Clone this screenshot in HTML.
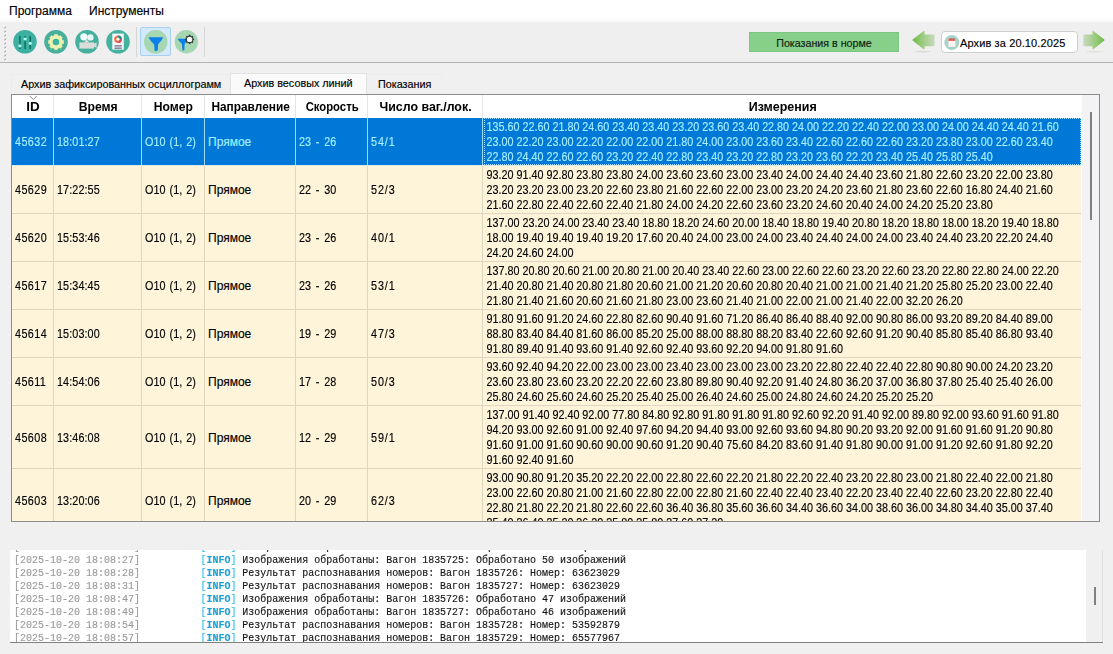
<!DOCTYPE html><html><head><meta charset="utf-8"><style>
*{box-sizing:border-box;margin:0;padding:0}
html,body{width:1113px;height:654px;overflow:hidden;background:#f0f0f0;font-family:"Liberation Sans",sans-serif;color:#000;position:relative}
div{position:absolute}
.menu{left:0;top:0;width:1113px;height:20px;background:#fff}
.menu span{position:absolute;top:4px;font-size:12px;line-height:14px;color:#000}
.tbar{left:0;top:20px;width:1113px;height:43px;background:#efefef;border-bottom:1px solid #b4b4b4;border-top:2px solid #fafafa}
.grip{left:3px;top:4px;width:4px;height:35px}
.sep{top:5px;width:1px;height:30px;background:#d6d6d6}
.ok{left:749px;top:32px;width:150px;height:20px;background:#86d08a;border:1px solid #7cc680;font-size:10.7px;line-height:20px;text-align:center;color:#102010}
.date{left:941px;top:31px;width:137px;height:22px;background:#fff;border:1px solid #cfcfcf;border-radius:4px}
.date span{position:absolute;left:18px;top:4px;font-size:11px;letter-spacing:0.12px;line-height:14px;color:#000}
.tab{top:74px;height:20px;font-size:10.8px;line-height:19px;color:#000;background:#f0f0f0;border:1px solid #ebebeb;border-bottom:none;border-right:none}
.t1{left:11px;width:220px;padding-left:9px}
.t2{left:230px;top:73px;width:137px;height:21px;background:#fafafa;padding-left:13px;border-color:#e2e2e2;border-right:1px solid #e2e2e2;line-height:19px}
.t3{left:366px;width:77px;padding-left:11px}
.tbl{left:11px;top:94px;width:1089px;height:428px;border:1px solid #8c8c8c;background:#f0f0f0}
.hdr{left:12px;top:95px;width:1069px;height:23px;background:#fff}
.hc{top:95px;height:23px;font-size:12px;font-weight:bold;line-height:24px;text-align:center;padding-left:2px}
.hc span{display:inline-block}
.hdiv{top:95px;width:1px;height:23px;background:#e5e5e5}
.sorti{left:29px;top:95px;width:9px;height:6px}
.row{left:12px;width:1069px;background:#fef4da;overflow:hidden}
.row.sel{background:#0078d7;color:#a4eeff}
.row::after{content:"";position:absolute;left:0;right:0;bottom:0;height:1px;background:#e0d6c0}
.row.sel::after{background:#dde8ec}
.c{top:0;font-size:12px;padding-left:4px;white-space:nowrap;overflow:hidden}
.c span{display:inline-block;transform:scaleX(0.9);transform-origin:0 50%}
.c.cy span{transform:none}
.vdiv{top:0;width:1px;height:100%;background:#e0d6c0}
.sel .vdiv{background:#9fdcf5}
.m{top:2px;padding-left:5px;font-size:12px;line-height:15px;white-space:nowrap;transform:scaleX(0.898);transform-origin:0 0}
.focus{top:0;width:597px;height:47px;border:1px dotted #9fdcf5}
.vsb{left:1081px;top:95px;width:18px;height:426px;background:#f3f3f6;border-left:1px solid #fbfbfb}
.vth{left:8px;top:17px;width:2px;height:108px;background:#808080}
.log{left:10px;top:550px;width:1093px;height:93px;background:#f0f0f0;border-bottom:1px solid #808080}
.login{left:0;top:0;width:1076px;height:92px;background:#fff;overflow:hidden}
.ll{left:4px;height:13px;font-family:"Liberation Mono",monospace;font-size:11.3px;line-height:14px;white-space:pre;transform:scaleX(0.8846);transform-origin:0 0}
.ts{color:#9a9a9a}
.inf{position:absolute;left:210.8px;color:#30bce6}
.inf b{font-weight:bold;color:#1ca0d4}
.msg{position:absolute;left:258px;color:#141414}
.lsb{left:1076px;top:0;width:17px;height:92px;background:#f0f0f0;border-right:1px solid #e0e0e0}
.lth{left:8px;top:37px;width:2px;height:18px;background:#808080}
.tbody{left:12px;top:118px;width:1069px;height:403px;overflow:hidden}
.row{left:0}
.hl{left:140px;top:5px;width:31px;height:29px;background:#d2eafc;border:1px solid #a8d0f2;border-radius:2px}
.row .c, .row .m, .tab, .menu span, .ok, .date span, .ll{-webkit-text-stroke:0.15px currentColor}

</style></head><body>
<div class="menu"><span style="left:9px">Программа</span><span style="left:89px">Инструменты</span></div>
<div class="tbar">
 <div class="grip"><svg style="display:block" width="4" height="35" viewBox="0 0 4 35"><g fill="#8c8c8c"><path d="M1 2.1 L2.6 0.5 L3.2 1.0 L1.6 2.6 Z"/><path d="M1 6.1 L2.6 4.5 L3.2 5.0 L1.6 6.6 Z"/><path d="M1 10.1 L2.6 8.5 L3.2 9.0 L1.6 10.6 Z"/><path d="M1 14.1 L2.6 12.5 L3.2 13.0 L1.6 14.6 Z"/><path d="M1 18.1 L2.6 16.5 L3.2 17.0 L1.6 18.6 Z"/><path d="M1 22.1 L2.6 20.5 L3.2 21.0 L1.6 22.6 Z"/><path d="M1 26.1 L2.6 24.5 L3.2 25.0 L1.6 26.6 Z"/><path d="M1 30.1 L2.6 28.5 L3.2 29.0 L1.6 30.6 Z"/><path d="M1 34.1 L2.6 32.5 L3.2 33.0 L1.6 34.6 Z"/></g></svg></div>
 <div class="sep" style="left:136px"></div>
 <div class="sep" style="left:204px"></div>
 <div class="hl"></div>
</div>
<svg style="position:absolute;left:0;top:0" width="220" height="63" viewBox="0 0 220 63">
 <defs>
  <filter id="bl" x="-20%" y="-20%" width="140%" height="140%"><feGaussianBlur stdDeviation="0.45"/></filter>
 </defs>
 <g filter="url(#bl)">
 <!-- icon1 sliders -->
 <circle cx="25" cy="41.8" r="11.8" fill="#3db1a1"/>
 <rect x="19.2" y="36" width="1.4" height="13" fill="#0b6b5c"/>
 <rect x="24.4" y="36" width="1.4" height="13" fill="#0b6b5c"/>
 <rect x="29.5" y="36" width="1.4" height="13" fill="#0b6b5c"/>
 <circle cx="19.9" cy="45.8" r="1.6" fill="#b0fafa"/>
 <circle cx="25.1" cy="39" r="1.6" fill="#b0fafa"/>
 <circle cx="30.2" cy="43.3" r="1.6" fill="#b0fafa"/>
 <!-- icon2 gear -->
 <circle cx="56" cy="41.8" r="11.8" fill="#47af9a"/>
 <path d="M63.55 40.50 L63.55 43.50 L62.41 43.59 L61.65 45.40 L62.40 46.28 L60.28 48.40 L59.40 47.65 L57.59 48.41 L57.50 49.55 L54.50 49.55 L54.41 48.41 L52.60 47.65 L51.72 48.40 L49.60 46.28 L50.35 45.40 L49.59 43.59 L48.45 43.50 L48.45 40.50 L49.59 40.41 L50.35 38.60 L49.60 37.72 L51.72 35.60 L52.60 36.35 L54.41 35.59 L54.50 34.45 L57.50 34.45 L57.59 35.59 L59.40 36.35 L60.28 35.60 L62.40 37.72 L61.65 38.60 L62.41 40.41 Z" fill="#eef2b0" stroke="#eef2b0" stroke-width="0.6" stroke-linejoin="round"/>
 <circle cx="56" cy="42" r="3.3" fill="#3db3a2"/>
 <!-- icon3 camera -->
 <circle cx="87" cy="41.8" r="11.8" fill="#45b09e"/>
 <path d="M79.4 42.4 L94 42.4 L94 48.6 L79.4 48.6 Z" fill="#dcdcda"/>
 <path d="M94 43.6 L96.6 42.6 L96.6 47.8 L94 46.8 Z" fill="#d8dcd8"/>
 <path d="M84 42.6 L86.6 39.2 L89.2 42.6 Z" fill="#dcdcda"/>
 <circle cx="83.8" cy="36.8" r="3.6" fill="#f2fcfc"/>
 <circle cx="90.4" cy="37.4" r="3.2" fill="#e6fafa"/>
 <!-- icon4 doc -->
 <circle cx="118" cy="41.8" r="11.8" fill="#45b2a0"/>
 <rect x="112.3" y="33.6" width="11.5" height="16" fill="#f4fafa"/>
 <circle cx="118" cy="39.2" r="3.8" fill="#f07040"/>
 <path d="M118 39.2 L118 35.4 A3.8 3.8 0 0 1 121.8 39.2 Z" fill="#1f8a80"/>
 <path d="M118 39.2 L121.8 39.2 A3.8 3.8 0 0 1 118.5 43 Z" fill="#e04060"/>
 <circle cx="118" cy="39.2" r="1.6" fill="#f4fafa"/>
 <rect x="114.4" y="45.2" width="7.4" height="1.3" fill="#7a6a8a"/>
 <rect x="114.4" y="47.5" width="7.4" height="1.3" fill="#7a6a8a"/>
 <!-- icon5 funnel -->
 <circle cx="155.7" cy="41.8" r="11.8" fill="#a6d6b2"/>
 <path d="M148.6 37.2 L163 37.2 C162.6 39.4 159.6 42.4 158 44.4 L157.8 50 C157.2 51 155.6 51.2 154.6 50.8 L154.2 44.4 C152.2 42.4 149.2 39.4 148.6 37.2 Z" fill="#0a80e8"/>
 <!-- icon6 funnel+gear -->
 <circle cx="186.3" cy="41.8" r="11.7" fill="#a6d6b2"/>
 <path d="M177.8 38.8 L188 38.8 C187.6 40.6 185.6 42.6 184.6 44 L184.4 49.8 C184 50.6 183 50.6 182.4 50.2 L182 44 C180.6 42.6 178.2 40.6 177.8 38.8 Z" fill="#0a80e8"/>
 <path d="M194.13 38.59 L194.13 40.21 L193.19 40.28 L192.76 41.32 L193.37 42.03 L192.23 43.17 L191.52 42.56 L190.48 42.99 L190.41 43.93 L188.79 43.93 L188.72 42.99 L187.68 42.56 L186.97 43.17 L185.83 42.03 L186.44 41.32 L186.01 40.28 L185.07 40.21 L185.07 38.59 L186.01 38.52 L186.44 37.48 L185.83 36.77 L186.97 35.63 L187.68 36.24 L188.72 35.81 L188.79 34.87 L190.41 34.87 L190.48 35.81 L191.52 36.24 L192.23 35.63 L193.37 36.77 L192.76 37.48 L193.19 38.52 Z" fill="#2a3432"/>
 <circle cx="189.6" cy="39.4" r="2.7" fill="#ffffff"/>
 </g>
</svg>
<div class="ok">Показания в норме</div>
<svg style="position:absolute;left:905px;top:25px" width="210" height="32" viewBox="905 25 210 32">
 <defs>
  <linearGradient id="ga" x1="0" x2="1" y1="0" y2="0"><stop offset="0" stop-color="#72bc48"/><stop offset="0.45" stop-color="#9ccc80"/><stop offset="1" stop-color="#c6d8bc"/></linearGradient>
  <linearGradient id="gb" x1="0" x2="1" y1="0" y2="0"><stop offset="0" stop-color="#c6d8bc"/><stop offset="0.55" stop-color="#9ccc80"/><stop offset="1" stop-color="#72bc48"/></linearGradient>
  <filter id="bl2"><feGaussianBlur stdDeviation="0.5"/></filter>
 </defs>
 <g filter="url(#bl2)">
 <path d="M913 40 L924 31.5 L924 35 L934 35 L934 45.7 L924 45.7 L924 48.8 Z" fill="url(#ga)" stroke="url(#ga)" stroke-width="1.2" stroke-linejoin="round"/>
 <ellipse cx="923" cy="51.6" rx="8" ry="0.8" fill="#dadada"/>
 <path d="M1104 40 L1093 31.5 L1093 35 L1084 35 L1084 45.7 L1093 45.7 L1093 48.8 Z" fill="url(#gb)" stroke="url(#gb)" stroke-width="1.2" stroke-linejoin="round"/>
 <ellipse cx="1094" cy="51.6" rx="8" ry="0.8" fill="#e0e0e0"/>
 </g>
</svg>
<div class="date"><svg style="position:absolute;left:1px;top:1px;display:block" width="18" height="18" viewBox="0 0 18 18">
 <circle cx="8.8" cy="9.5" r="7.5" fill="#a9d3c6"/>
 <rect x="5.4" y="5.8" width="7" height="8" fill="#faf6f4"/>
 <rect x="5.4" y="5.8" width="7" height="2.2" fill="#e46a64"/>
 <rect x="6.6" y="5" width="0.9" height="1.6" fill="#b04848"/><rect x="8.5" y="5" width="0.9" height="1.6" fill="#b04848"/><rect x="10.4" y="5" width="0.9" height="1.6" fill="#b04848"/>
 </svg><span>Архив за 20.10.2025</span></div>

<div class="tab t1">Архив зафиксированных осциллограмм</div>
<div class="tab t3">Показания</div>
<div class="tab t2">Архив весовых линий</div>
<div class="tbl"></div>
<div class="hdr"></div>
<div class="hc" style="left:11px;width:42px"><span style="transform:scaleX(1.12)">ID</span></div>
<div class="hc" style="left:53px;width:88px"><span style="transform:scaleX(1.017)">Время</span></div>
<div class="hdiv" style="left:53px"></div>
<div class="hc" style="left:141px;width:63px"><span style="transform:scaleX(1.011)">Номер</span></div>
<div class="hdiv" style="left:141px"></div>
<div class="hc" style="left:204px;width:91px"><span style="transform:scaleX(0.99)">Направление</span></div>
<div class="hdiv" style="left:204px"></div>
<div class="hc" style="left:295px;width:72px"><span style="transform:scaleX(0.94)">Скорость</span></div>
<div class="hdiv" style="left:295px"></div>
<div class="hc" style="left:367px;width:115px"><span style="transform:scaleX(1.033)">Число ваг./лок.</span></div>
<div class="hdiv" style="left:367px"></div>
<div class="hc" style="left:482px;width:599px"><span style="transform:scaleX(1.038)">Измерения</span></div>
<div class="hdiv" style="left:482px"></div>
<div class="sorti"><svg style="display:block" width="9" height="6" viewBox="0 0 9 6"><polyline points="0.8,1 4.3,4.5 7.8,1" fill="none" stroke="#8a8a8a" stroke-width="1"/></svg></div>
<div class="tbody">
<div class="row sel" style="top:0px;height:48px">
<div class="c" style="left:-1px;width:42px;line-height:49px"><span style="letter-spacing:0.45px">45632</span></div>
<div class="c" style="left:41px;width:88px;line-height:49px"><span style="letter-spacing:0.1px">18:01:27</span></div>
<div class="vdiv" style="left:41px"></div>
<div class="c" style="left:129px;width:63px;line-height:49px"><span style="word-spacing:1.3px">О10 (1, 2)</span></div>
<div class="vdiv" style="left:129px"></div>
<div class="c cy" style="left:192px;width:91px;line-height:49px"><span style="">Прямое</span></div>
<div class="vdiv" style="left:192px"></div>
<div class="c" style="left:283px;width:72px;line-height:49px"><span style="word-spacing:2px">23 - 26</span></div>
<div class="vdiv" style="left:283px"></div>
<div class="c" style="left:355px;width:115px;line-height:49px"><span style="letter-spacing:1px">54/1</span></div>
<div class="vdiv" style="left:355px"></div>
<div class="vdiv" style="left:470px"></div>
<div class="m" style="left:470px">135.60 22.60 21.80 24.60 23.40 23.40 23.20 23.60 23.40 22.80 24.00 22.20 22.40 22.00 23.00 24.00 24.40 24.40 21.60<br>23.00 22.20 23.00 22.20 22.00 22.00 21.80 24.00 23.00 23.60 23.40 22.60 22.60 22.60 23.20 23.80 23.00 22.60 23.40<br>22.80 24.40 22.60 22.60 23.20 22.40 22.80 23.40 23.20 22.80 23.20 23.60 22.20 23.40 25.40 25.80 25.40</div>
<div class="focus" style="left:472px"></div>
</div>
<div class="row" style="top:48px;height:48px">
<div class="c" style="left:-1px;width:42px;line-height:49px"><span style="letter-spacing:0.45px">45629</span></div>
<div class="c" style="left:41px;width:88px;line-height:49px"><span style="letter-spacing:0.1px">17:22:55</span></div>
<div class="vdiv" style="left:41px"></div>
<div class="c" style="left:129px;width:63px;line-height:49px"><span style="word-spacing:1.3px">О10 (1, 2)</span></div>
<div class="vdiv" style="left:129px"></div>
<div class="c cy" style="left:192px;width:91px;line-height:49px"><span style="">Прямое</span></div>
<div class="vdiv" style="left:192px"></div>
<div class="c" style="left:283px;width:72px;line-height:49px"><span style="word-spacing:2px">22 - 30</span></div>
<div class="vdiv" style="left:283px"></div>
<div class="c" style="left:355px;width:115px;line-height:49px"><span style="letter-spacing:1px">52/3</span></div>
<div class="vdiv" style="left:355px"></div>
<div class="vdiv" style="left:470px"></div>
<div class="m" style="left:470px">93.20 91.40 92.80 23.80 23.80 24.00 23.60 23.60 23.00 23.40 24.00 24.40 24.40 23.60 21.80 22.60 23.20 22.00 23.80<br>23.20 23.20 23.00 23.20 22.60 23.80 21.60 22.60 22.00 23.00 23.20 24.20 23.60 21.80 23.60 22.60 16.80 24.40 21.60<br>21.60 22.80 22.40 22.60 22.40 21.80 24.00 24.20 22.60 23.60 23.20 24.60 20.40 24.00 24.20 25.20 23.80</div>
</div>
<div class="row" style="top:96px;height:48px">
<div class="c" style="left:-1px;width:42px;line-height:49px"><span style="letter-spacing:0.45px">45620</span></div>
<div class="c" style="left:41px;width:88px;line-height:49px"><span style="letter-spacing:0.1px">15:53:46</span></div>
<div class="vdiv" style="left:41px"></div>
<div class="c" style="left:129px;width:63px;line-height:49px"><span style="word-spacing:1.3px">О10 (1, 2)</span></div>
<div class="vdiv" style="left:129px"></div>
<div class="c cy" style="left:192px;width:91px;line-height:49px"><span style="">Прямое</span></div>
<div class="vdiv" style="left:192px"></div>
<div class="c" style="left:283px;width:72px;line-height:49px"><span style="word-spacing:2px">23 - 26</span></div>
<div class="vdiv" style="left:283px"></div>
<div class="c" style="left:355px;width:115px;line-height:49px"><span style="letter-spacing:1px">40/1</span></div>
<div class="vdiv" style="left:355px"></div>
<div class="vdiv" style="left:470px"></div>
<div class="m" style="left:470px">137.00 23.20 24.00 23.40 23.40 18.80 18.20 24.60 20.00 18.40 18.80 19.40 20.80 18.20 18.80 18.00 18.20 19.40 18.80<br>18.00 19.40 19.40 19.40 19.20 17.60 20.40 24.00 23.00 24.00 23.40 24.40 24.00 24.00 23.40 24.40 23.20 22.20 24.40<br>24.20 24.60 24.00</div>
</div>
<div class="row" style="top:144px;height:48px">
<div class="c" style="left:-1px;width:42px;line-height:49px"><span style="letter-spacing:0.45px">45617</span></div>
<div class="c" style="left:41px;width:88px;line-height:49px"><span style="letter-spacing:0.1px">15:34:45</span></div>
<div class="vdiv" style="left:41px"></div>
<div class="c" style="left:129px;width:63px;line-height:49px"><span style="word-spacing:1.3px">О10 (1, 2)</span></div>
<div class="vdiv" style="left:129px"></div>
<div class="c cy" style="left:192px;width:91px;line-height:49px"><span style="">Прямое</span></div>
<div class="vdiv" style="left:192px"></div>
<div class="c" style="left:283px;width:72px;line-height:49px"><span style="word-spacing:2px">23 - 26</span></div>
<div class="vdiv" style="left:283px"></div>
<div class="c" style="left:355px;width:115px;line-height:49px"><span style="letter-spacing:1px">53/1</span></div>
<div class="vdiv" style="left:355px"></div>
<div class="vdiv" style="left:470px"></div>
<div class="m" style="left:470px">137.80 20.80 20.60 21.00 20.80 21.00 20.40 23.40 22.60 23.00 22.60 22.60 23.20 22.60 23.20 22.80 22.80 24.00 22.20<br>21.40 20.80 21.40 20.80 21.80 20.60 21.00 21.20 20.60 20.80 20.40 21.00 21.00 21.40 21.20 25.80 25.20 23.00 22.40<br>21.80 21.40 21.60 20.60 21.60 21.80 23.00 23.60 21.40 21.00 22.00 21.00 21.40 22.00 32.20 26.20</div>
</div>
<div class="row" style="top:192px;height:48px">
<div class="c" style="left:-1px;width:42px;line-height:49px"><span style="letter-spacing:0.45px">45614</span></div>
<div class="c" style="left:41px;width:88px;line-height:49px"><span style="letter-spacing:0.1px">15:03:00</span></div>
<div class="vdiv" style="left:41px"></div>
<div class="c" style="left:129px;width:63px;line-height:49px"><span style="word-spacing:1.3px">О10 (1, 2)</span></div>
<div class="vdiv" style="left:129px"></div>
<div class="c cy" style="left:192px;width:91px;line-height:49px"><span style="">Прямое</span></div>
<div class="vdiv" style="left:192px"></div>
<div class="c" style="left:283px;width:72px;line-height:49px"><span style="word-spacing:2px">19 - 29</span></div>
<div class="vdiv" style="left:283px"></div>
<div class="c" style="left:355px;width:115px;line-height:49px"><span style="letter-spacing:1px">47/3</span></div>
<div class="vdiv" style="left:355px"></div>
<div class="vdiv" style="left:470px"></div>
<div class="m" style="left:470px">91.80 91.60 91.20 24.60 22.80 82.60 90.40 91.60 71.20 86.40 86.40 88.40 92.00 90.80 86.00 93.20 89.20 84.40 89.00<br>88.80 83.40 84.40 81.60 86.00 85.20 25.00 88.00 88.80 88.20 83.40 22.60 92.60 91.20 90.40 85.80 85.40 86.80 93.40<br>91.80 89.40 91.40 93.60 91.40 92.60 92.40 93.60 92.20 94.00 91.80 91.60</div>
</div>
<div class="row" style="top:240px;height:48px">
<div class="c" style="left:-1px;width:42px;line-height:49px"><span style="letter-spacing:0.45px">45611</span></div>
<div class="c" style="left:41px;width:88px;line-height:49px"><span style="letter-spacing:0.1px">14:54:06</span></div>
<div class="vdiv" style="left:41px"></div>
<div class="c" style="left:129px;width:63px;line-height:49px"><span style="word-spacing:1.3px">О10 (1, 2)</span></div>
<div class="vdiv" style="left:129px"></div>
<div class="c cy" style="left:192px;width:91px;line-height:49px"><span style="">Прямое</span></div>
<div class="vdiv" style="left:192px"></div>
<div class="c" style="left:283px;width:72px;line-height:49px"><span style="word-spacing:2px">17 - 28</span></div>
<div class="vdiv" style="left:283px"></div>
<div class="c" style="left:355px;width:115px;line-height:49px"><span style="letter-spacing:1px">50/3</span></div>
<div class="vdiv" style="left:355px"></div>
<div class="vdiv" style="left:470px"></div>
<div class="m" style="left:470px">93.60 92.40 94.20 22.00 23.00 23.00 23.40 23.00 23.00 23.00 23.20 22.80 22.40 22.40 22.80 90.80 90.00 24.20 23.20<br>23.60 23.80 23.60 23.20 22.20 22.60 23.80 89.80 90.40 92.20 91.40 24.80 36.20 37.00 36.80 37.80 25.40 25.40 26.00<br>25.80 24.60 25.60 24.60 25.20 25.40 25.00 26.40 24.60 25.00 24.80 24.60 24.20 25.20 25.20</div>
</div>
<div class="row" style="top:288px;height:63px">
<div class="c" style="left:-1px;width:42px;line-height:64px"><span style="letter-spacing:0.45px">45608</span></div>
<div class="c" style="left:41px;width:88px;line-height:64px"><span style="letter-spacing:0.1px">13:46:08</span></div>
<div class="vdiv" style="left:41px"></div>
<div class="c" style="left:129px;width:63px;line-height:64px"><span style="word-spacing:1.3px">О10 (1, 2)</span></div>
<div class="vdiv" style="left:129px"></div>
<div class="c cy" style="left:192px;width:91px;line-height:64px"><span style="">Прямое</span></div>
<div class="vdiv" style="left:192px"></div>
<div class="c" style="left:283px;width:72px;line-height:64px"><span style="word-spacing:2px">12 - 29</span></div>
<div class="vdiv" style="left:283px"></div>
<div class="c" style="left:355px;width:115px;line-height:64px"><span style="letter-spacing:1px">59/1</span></div>
<div class="vdiv" style="left:355px"></div>
<div class="vdiv" style="left:470px"></div>
<div class="m" style="left:470px">137.00 91.40 92.40 92.00 77.80 84.80 92.80 91.80 91.80 91.80 92.60 92.20 91.40 92.00 89.80 92.00 93.60 91.60 91.80<br>94.20 93.00 92.60 91.00 92.40 97.60 94.20 94.40 93.00 92.60 93.60 94.80 90.20 93.20 92.00 91.60 91.60 91.20 90.80<br>91.60 91.00 91.60 90.60 90.00 90.60 91.20 90.40 75.60 84.20 83.60 91.40 91.80 90.00 91.00 91.20 92.60 91.80 92.20<br>91.60 92.40 91.60</div>
</div>
<div class="row" style="top:351px;height:63px">
<div class="c" style="left:-1px;width:42px;line-height:64px"><span style="letter-spacing:0.45px">45603</span></div>
<div class="c" style="left:41px;width:88px;line-height:64px"><span style="letter-spacing:0.1px">13:20:06</span></div>
<div class="vdiv" style="left:41px"></div>
<div class="c" style="left:129px;width:63px;line-height:64px"><span style="word-spacing:1.3px">О10 (1, 2)</span></div>
<div class="vdiv" style="left:129px"></div>
<div class="c cy" style="left:192px;width:91px;line-height:64px"><span style="">Прямое</span></div>
<div class="vdiv" style="left:192px"></div>
<div class="c" style="left:283px;width:72px;line-height:64px"><span style="word-spacing:2px">20 - 29</span></div>
<div class="vdiv" style="left:283px"></div>
<div class="c" style="left:355px;width:115px;line-height:64px"><span style="letter-spacing:1px">62/3</span></div>
<div class="vdiv" style="left:355px"></div>
<div class="vdiv" style="left:470px"></div>
<div class="m" style="left:470px">93.00 90.80 91.20 35.20 22.20 22.00 22.80 22.60 22.20 21.80 22.20 22.40 23.20 22.80 23.00 21.80 22.40 22.00 21.80<br>23.00 22.60 20.80 21.00 21.60 22.80 22.00 22.80 21.60 22.40 22.40 23.40 22.20 23.40 22.40 22.60 23.20 22.80 22.40<br>22.80 21.80 22.20 21.80 22.60 22.60 36.40 36.80 35.60 36.60 34.40 36.60 34.00 38.60 36.00 34.80 34.40 35.00 37.40<br>35.40 36.40 35.20 36.20 35.80 35.80 37.60 37.20</div>
</div>
</div>
<div class="vsb"><div class="vth"></div></div>
<div class="log"><div class="login">
<div class="ll" style="top:-10px"><span class="ts">[2025-10-20 18:08:26]</span><span class="inf">[<b>INFO</b>]</span> <span class="msg">Изображения обработаны: Вагон 1835724: Обработано 48 изображений</span></div>
<div class="ll" style="top:3px"><span class="ts">[2025-10-20 18:08:27]</span><span class="inf">[<b>INFO</b>]</span> <span class="msg">Изображения обработаны: Вагон 1835725: Обработано 50 изображений</span></div>
<div class="ll" style="top:16px"><span class="ts">[2025-10-20 18:08:28]</span><span class="inf">[<b>INFO</b>]</span> <span class="msg">Результат распознавания номеров: Вагон 1835726: Номер: 63623029</span></div>
<div class="ll" style="top:29px"><span class="ts">[2025-10-20 18:08:31]</span><span class="inf">[<b>INFO</b>]</span> <span class="msg">Результат распознавания номеров: Вагон 1835727: Номер: 63623029</span></div>
<div class="ll" style="top:42px"><span class="ts">[2025-10-20 18:08:47]</span><span class="inf">[<b>INFO</b>]</span> <span class="msg">Изображения обработаны: Вагон 1835726: Обработано 47 изображений</span></div>
<div class="ll" style="top:55px"><span class="ts">[2025-10-20 18:08:49]</span><span class="inf">[<b>INFO</b>]</span> <span class="msg">Изображения обработаны: Вагон 1835727: Обработано 46 изображений</span></div>
<div class="ll" style="top:68px"><span class="ts">[2025-10-20 18:08:54]</span><span class="inf">[<b>INFO</b>]</span> <span class="msg">Результат распознавания номеров: Вагон 1835728: Номер: 53592879</span></div>
<div class="ll" style="top:81px"><span class="ts">[2025-10-20 18:08:57]</span><span class="inf">[<b>INFO</b>]</span> <span class="msg">Результат распознавания номеров: Вагон 1835729: Номер: 65577967</span></div>
</div><div class="lsb"><div class="lth"></div></div></div>
</body></html>
